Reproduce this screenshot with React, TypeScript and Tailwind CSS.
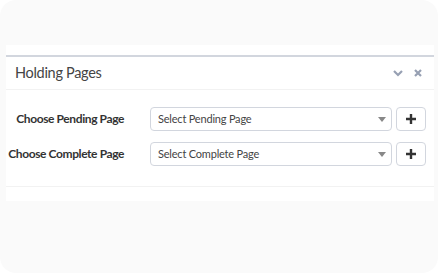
import React from "react";

const font = { fontFamily: "Lato, 'Noto Sans', sans-serif" };

const Caret = () => (
  <svg width="8" height="5" viewBox="0 0 8 5" className="shrink-0">
    <path d="M0 0h8L4 5z" fill="#888" />
  </svg>
);

const Plus = () => (
  <svg width="10" height="10" viewBox="0 0 10 10">
    <path d="M3.8 0h2.4v3.8H10v2.4H6.2V10H3.8V6.2H0V3.8h3.8z" fill="#333" />
  </svg>
);

const Row = ({ label, placeholder }: { label: string; placeholder: string }) => (
  <div className="flex items-center h-[24px]">
    <div className="w-[118px] shrink-0 whitespace-nowrap text-right text-[12px] font-bold tracking-[-0.4px] text-[#333]">
      {label}
    </div>
    <div className="ml-[26px] shrink-0 w-[242px] h-[24px] flex items-center justify-between border border-[#d2d6de] rounded-[4px] pl-[7px] pr-[5px] text-[11px] text-[#444]">
      <span className="whitespace-nowrap tracking-[-0.2px]">{placeholder}</span>
      <Caret />
    </div>
    <button className="ml-[4px] shrink-0 w-[30px] h-[24px] flex items-center justify-center border border-[#d2d6de] rounded-[4px] bg-white">
      <Plus />
    </button>
  </div>
);

export default function App() {
  return (
    <div className="w-[438px] h-[273px] bg-white" style={font}>
      <div className="w-full h-full bg-[#fafafa] rounded-[16px] pt-[45px] px-[6px]">
        <div className="bg-white w-[428px] pt-[10px]">
          <div className="border-t-2 border-[#d2d6de]">
            <div className="h-[33px] flex items-center justify-between px-[9px] border-b border-[#f2f2f2]">
              <span className="text-[14.5px] tracking-[-0.3px] text-[#444]">Holding Pages</span>
              <div className="flex items-center gap-[11px] pr-[3px]">
                <svg width="10" height="7" viewBox="0 0 10 7">
                  <path d="M1 1l4 4 4-4" stroke="#97a0b3" strokeWidth="2.2" fill="none" />
                </svg>
                <svg width="8" height="8" viewBox="0 0 8 8">
                  <path d="M1 1l6 6M7 1L1 7" stroke="#97a0b3" strokeWidth="2.2" />
                </svg>
              </div>
            </div>
            <div className="pt-[17px] pb-[20px] flex flex-col gap-[11px]">
              <Row label="Choose Pending Page" placeholder="Select Pending Page" />
              <Row label="Choose Complete Page" placeholder="Select Complete Page" />
            </div>
            <div className="border-t border-[#f2f2f2] h-[15px]" />
          </div>
        </div>
      </div>
    </div>
  );
}
